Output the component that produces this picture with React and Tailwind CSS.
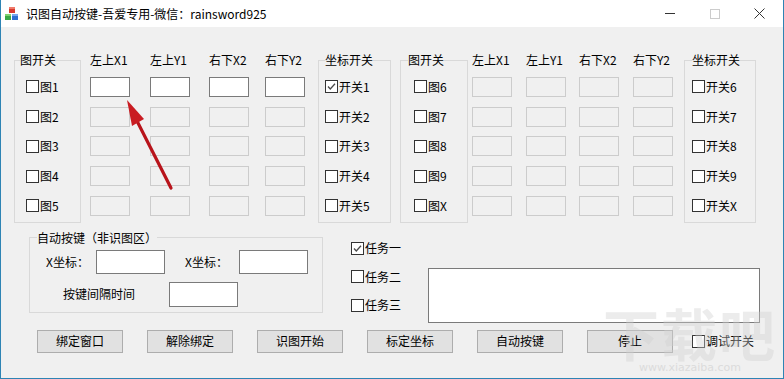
import React from 'react';

const CheckBox = ({ label, checked = false }) => (
  <div className="flex items-center">
    <span className="relative w-[13px] h-[13px] border border-[#333333] bg-white flex items-center justify-center">
      {checked && (
        <svg width="11" height="11" viewBox="0 0 11 11">
          <path d="M2 5.5 L4.3 8 L9 2.8" fill="none" stroke="#4a4a4a" strokeWidth="1.3" />
        </svg>
      )}
    </span>
    <span className="ml-px leading-4">{label}</span>
  </div>
);

const InputBox = ({ enabled = false, className = 'w-[40px] h-[20px]' }) => (
  <div className={`${className} border ${enabled ? 'bg-white border-[#7a7a7a]' : 'bg-[#f0f0f0] border-[#cccccc]'}`}></div>
);

const SwitchGroup = ({ title, items, width, pad, inner, checkedFirst = false }) => (
  <fieldset className={`${width} ${pad} border border-[#d9d9d9]`}>
    <legend className="leading-4 h-4">{title}</legend>
    <div className={`${inner} pt-[4px] pb-px`}>
      {items.map((it, i) => (
        <div key={it} className="h-[29.75px] flex items-center">
          <CheckBox label={it} checked={checkedFirst && i === 0} />
        </div>
      ))}
    </div>
  </fieldset>
);

const CoordColumn = ({ title, margin, enabled = false }) => (
  <div className={`flex flex-col w-[40px] ${margin}`}>
    <div className="h-4 leading-4 whitespace-nowrap">{title}</div>
    <div className="pt-[4px]">
      {[0, 1, 2, 3, 4].map((r) => (
        <div key={r} className="h-[29.75px] flex items-center">
          <InputBox enabled={enabled && r === 0} />
        </div>
      ))}
    </div>
  </div>
);

const AppIcon = () => (
  <svg width="16" height="16" viewBox="0 0 16 16">
    <rect x="5" y="1" width="6" height="6" fill="#d83a2e" />
    <rect x="5" y="1" width="6" height="2" fill="#f07a6a" />
    <rect x="1" y="8" width="6" height="6" fill="#3aa845" />
    <rect x="1" y="8" width="6" height="2" fill="#7fd36f" />
    <rect x="8" y="8" width="6" height="6" fill="#2f6fd0" />
    <rect x="8" y="8" width="6" height="2" fill="#78a8ee" />
  </svg>
);

export default function App() {
  return (
    <div className="relative w-[784px] h-[379px] overflow-hidden bg-[#f0f0f0] border-l border-r border-b border-[#2e84b4] text-[12px] text-black font-['Noto_Sans_CJK_SC','Microsoft_YaHei',sans-serif]">
      {/* Title bar */}
      <div className="h-[27px] bg-white flex items-center">
        <div className="ml-[3px] w-4 h-4">
          <AppIcon />
        </div>
        <span className="ml-[6px] leading-4">识图自动按键-吾爱专用-微信：rainsword925</span>
        <div className="ml-auto flex h-full mr-[1px]">
          <div className="w-[45px] h-full flex items-center justify-center">
            <div className="w-[10px] h-px bg-[#333]"></div>
          </div>
          <div className="w-[45px] h-full flex items-center justify-center">
            <div className="w-[10px] h-[10px] border border-[#cccccc]"></div>
          </div>
          <div className="w-[45px] h-full flex items-center justify-center">
            <svg width="11" height="11" viewBox="0 0 11 11">
              <path d="M0.5 0.5 L10.5 10.5 M10.5 0.5 L0.5 10.5" stroke="#333" strokeWidth="1" />
            </svg>
          </div>
        </div>
      </div>

      {/* Top section */}
      <div className="flex items-start mt-[25px] pl-[13px]">
        <SwitchGroup title="图开关" items={['图1', '图2', '图3', '图4', '图5']} width="w-[67px]" pad="px-[5px]" inner="pl-[6px]" />
        <CoordColumn title="左上X1" margin="ml-[9px]" enabled />
        <CoordColumn title="左上Y1" margin="ml-[20px]" enabled />
        <CoordColumn title="右下X2" margin="ml-[19px]" enabled />
        <CoordColumn title="右下Y2" margin="ml-[16px]" enabled />
        <div className="ml-[13px]">
          <SwitchGroup title="坐标开关" items={['开关1', '开关2', '开关3', '开关4', '开关5']} width="w-[73px]" pad="px-[6px]" inner="pl-0" checkedFirst />
        </div>
        <div className="ml-[9px]">
          <SwitchGroup title="图开关" items={['图6', '图7', '图8', '图9', '图X']} width="w-[68px]" pad="px-[7px]" inner="pl-[6px]" />
        </div>
        <CoordColumn title="左上X1" margin="ml-[4px]" />
        <CoordColumn title="左上Y1" margin="ml-[14px]" />
        <CoordColumn title="右下X2" margin="ml-[13px]" />
        <CoordColumn title="右下Y2" margin="ml-[14px]" />
        <div className="ml-[11px]">
          <SwitchGroup title="坐标开关" items={['开关6', '开关7', '开关8', '开关9', '开关X']} width="w-[72px]" pad="px-[7px]" inner="pl-0" />
        </div>
      </div>

      {/* Bottom section */}
      <div className="flex items-start h-[100px] mt-[7px] pl-[28px]">
        <fieldset className="w-[294px] h-[83px] px-[7px] border border-[#d9d9d9]">
          <legend className="leading-4 h-4">自动按键（非识图区）</legend>
          <div className="flex items-center h-[24px] mt-[4px]">
            <span className="w-[59px] pl-[9px] whitespace-nowrap">X坐标：</span>
            <InputBox enabled className="w-[69px] h-[24px]" />
            <span className="w-[74px] pl-[20px] whitespace-nowrap">X坐标：</span>
            <InputBox enabled className="w-[69px] h-[24px]" />
          </div>
          <div className="flex items-center h-[25px] mt-[8px]">
            <span className="w-[132px] pl-[26px] whitespace-nowrap">按键间隔时间</span>
            <InputBox enabled className="w-[69px] h-[25px]" />
          </div>
        </fieldset>
        <div className="ml-[28px] w-[60px] mt-[4px] flex flex-col">
          <div className="h-[28.5px] flex items-center"><CheckBox label="任务一" checked /></div>
          <div className="h-[28.5px] flex items-center"><CheckBox label="任务二" /></div>
          <div className="h-[28.5px] flex items-center"><CheckBox label="任务三" /></div>
        </div>
        <div className="ml-[17px] mt-[38px] w-[332px] h-[55px] bg-white border border-[#7a7a7a]"></div>
      </div>

      {/* Buttons */}
      <div className="flex items-center pl-[36px] gap-[24px]">
        {['绑定窗口', '解除绑定', '识图开始', '标定坐标', '自动按键', '停止'].map((b) => (
          <div key={b} className="w-[86px] h-[23px] bg-[#e1e1e1] border border-[#adadad] flex items-center justify-center leading-4">
            {b}
          </div>
        ))}
        <div className="-ml-[5px]">
          <CheckBox label="调试开关" />
        </div>
      </div>

      {/* Watermark */}
      <div className="absolute right-[6px] bottom-[4px] flex flex-col items-center pointer-events-none opacity-40">
        <span className="text-[56px] leading-[60px] font-bold text-[#d0d0d0] tracking-[2px]">下载吧</span>
        <span className="text-[11px] leading-3 text-[#bdbdbd] font-['DejaVu_Sans',sans-serif]">www.xiazaiba.com</span>
      </div>

      {/* Red arrow annotation */}
      <svg className="absolute left-0 top-0 pointer-events-none" width="784" height="379">
        <line x1="170" y1="188" x2="136" y2="121" stroke="#b8141b" strokeWidth="3.2" strokeLinecap="round" />
        <polygon points="126,100 143,119 131,126" fill="#c91c22" />
      </svg>
    </div>
  );
}
